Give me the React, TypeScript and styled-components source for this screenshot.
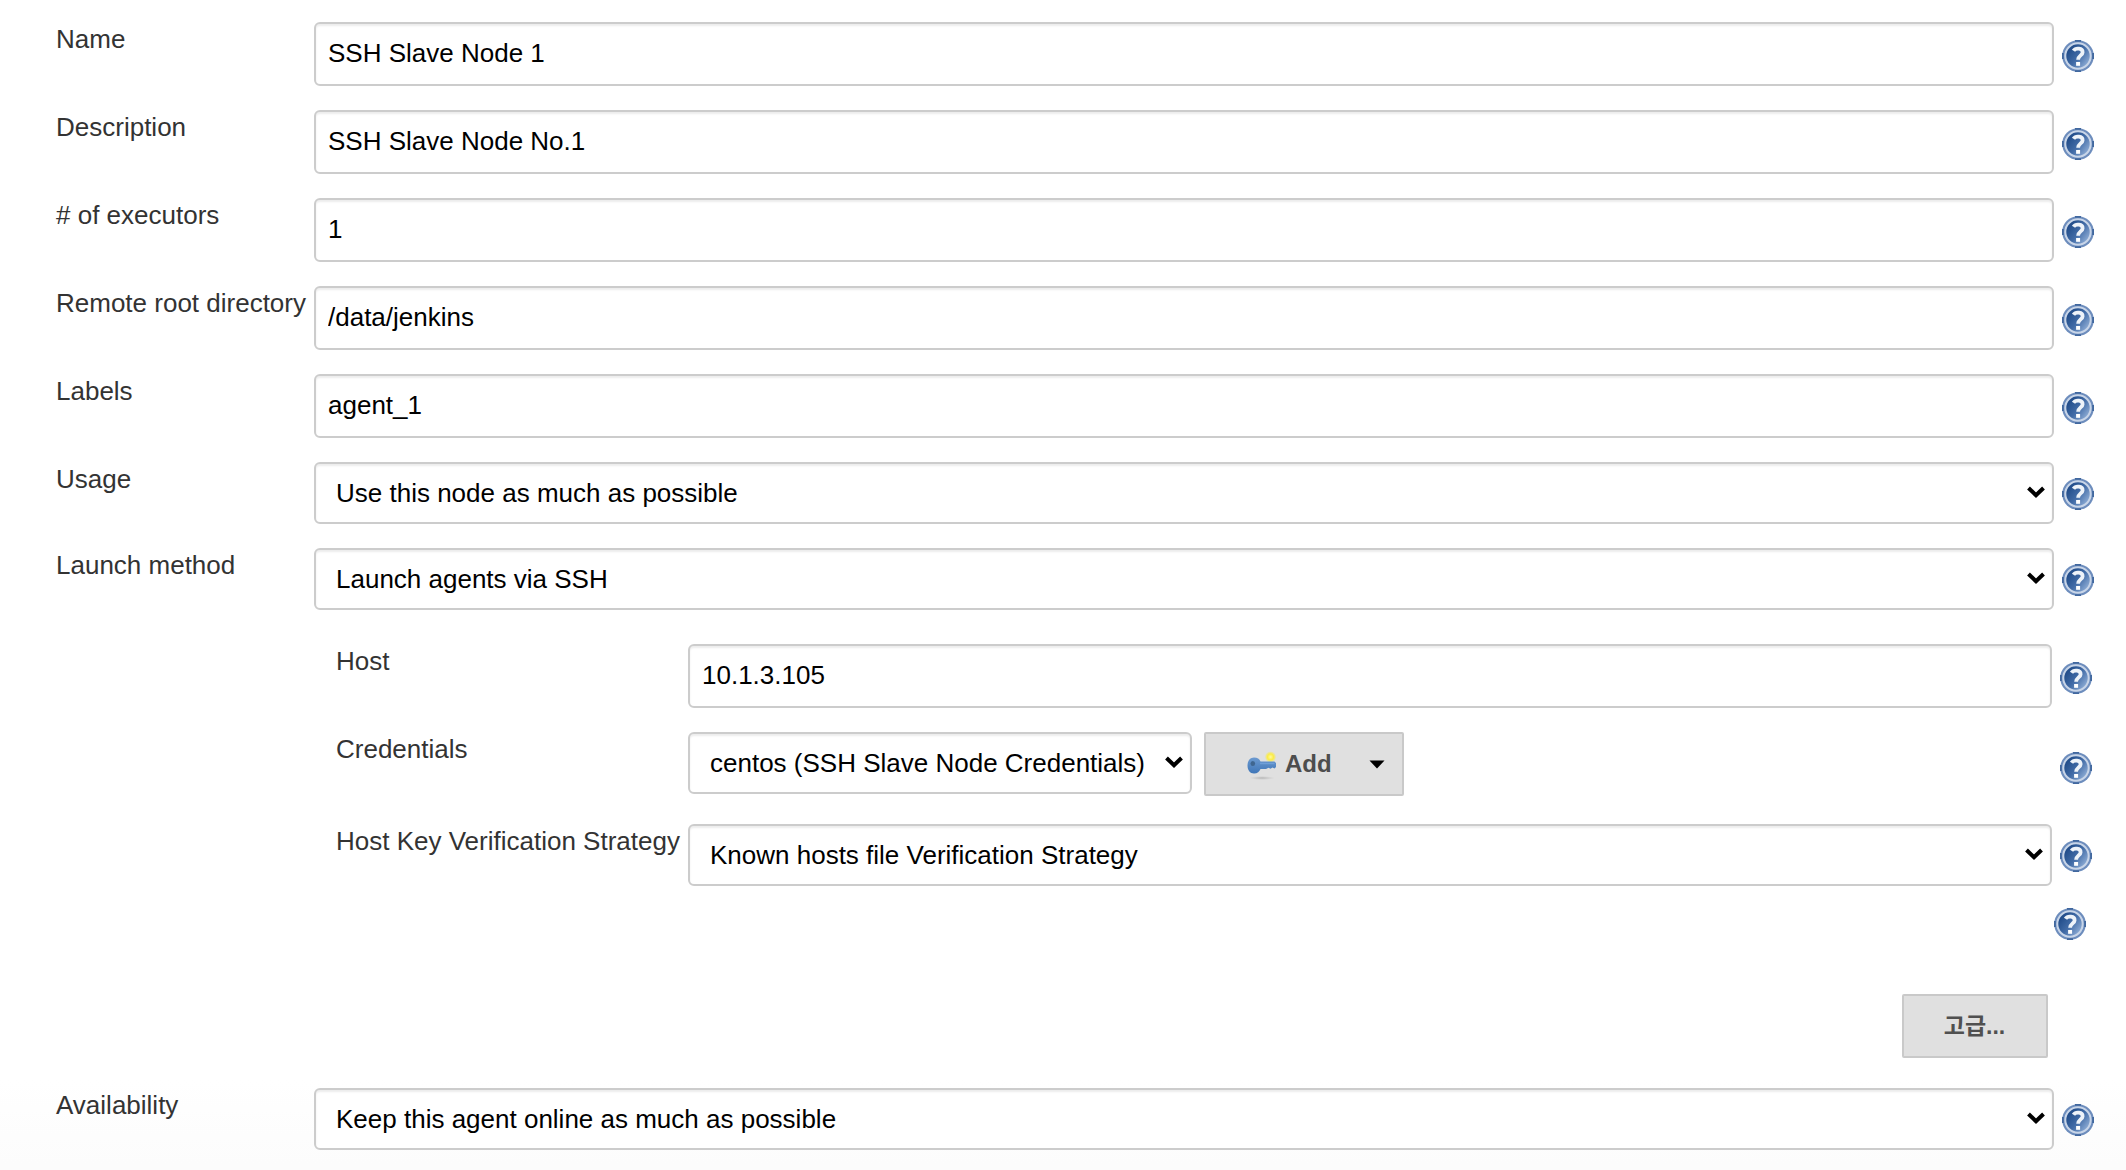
import React from "react";
import styled, { createGlobalStyle } from "styled-components";

const GlobalStyle = createGlobalStyle`
  html, body { margin: 0; padding: 0; background: #fff; }
  *, *::before, *::after { box-sizing: border-box; }
`;

const Page = styled.main`
  width: 2126px;
  height: 1170px;
  overflow: hidden;
  padding: 22px 0 0 56px;
  background: linear-gradient(to bottom, #ffffff 1080px, #fcfcfc 1165px);
  font-family: "Liberation Sans", Arial, "Noto Sans CJK KR", sans-serif;
  font-size: 26px;
  color: #333;
`;

const Row = styled.div<{ $label: number; $field: number; $height: number }>`
  display: grid;
  grid-template-columns: ${(p) => p.$label}px ${(p) => p.$field}px 40px;
  align-items: start;
  height: ${(p) => p.$height}px;
`;

const Label = styled.label`
  padding-top: 2px;
  line-height: 30px;
  white-space: nowrap;
`;

const Nested = styled.section`
  padding: 10px 0 0 280px;
`;

const Controls = styled.div`
  display: flex;
  gap: 12px;
`;

const Input = styled.input`
  width: 100%;
  height: 64px;
  padding: 0 12px 1px;
  border: 2px solid #ccc;
  border-radius: 6px;
  box-shadow: inset 0 2px 2px rgba(0, 0, 0, 0.075);
  background: #fff;
  color: #000;
  font: inherit;
  outline: none;
`;

const SelectBox = styled.div<{ $width?: number }>`
  display: flex;
  align-items: center;
  justify-content: space-between;
  width: ${(p) => (p.$width ? `${p.$width}px` : "100%")};
  height: 62px;
  padding: 0 7px 0 20px;
  border: 2px solid #ccc;
  border-radius: 6px;
  box-shadow: inset 0 2px 2px rgba(0, 0, 0, 0.075);
  background: #fff;
  color: #000;
  line-height: 30px;
  white-space: nowrap;
`;

const Chevron = styled.svg`
  display: block;
  width: 18px;
  height: 12px;
  margin-bottom: 2px;
  flex: none;
`;

const HelpButton = styled.a<{ $top: number }>`
  display: block;
  width: 32px;
  height: 32px;
  margin: ${(p) => p.$top}px 0 0 8px;
`;

const Button = styled.button<{ $width: number }>`
  display: flex;
  align-items: center;
  width: ${(p) => p.$width}px;
  height: 64px;
  padding: 0;
  border: 2px solid #c9c9c9;
  border-radius: 2px;
  background: #e0e0e0;
  color: #4d4d4d;
  font: bold 24px "Liberation Sans", Arial, "Noto Sans CJK KR", sans-serif;
`;

const AddButton = styled(Button)`
  padding: 0 17px 0 40px;
`;

const AddText = styled.span`
  margin-left: 7px;
  flex: 1;
  text-align: left;
`;

const AdvancedButton = styled(Button)`
  justify-content: center;
  padding: 0 1px 4px 0;
  font-size: 23px;
  color: #505050;
`;

const HelpOnly = styled.div`
  display: flex;
  justify-content: flex-end;
  height: 86px;
  padding-right: 40px;
`;

const Actions = styled.div`
  display: flex;
  justify-content: flex-end;
  height: 94px;
  padding-right: 78px;
`;

function HelpIcon() {
  return (
    <svg width="32" height="32" viewBox="0 0 32 32" aria-hidden="true">
      <defs>
        <linearGradient id="helpFill" x1="0.1" y1="0.25" x2="0.9" y2="0.85">
          <stop offset="0" stopColor="#204b88" />
          <stop offset="0.5" stopColor="#426ca7" />
          <stop offset="1" stopColor="#91afd7" />
        </linearGradient>
      </defs>
      <circle cx="16" cy="16" r="15.8" fill="#6d8dbd" />
      <path d="M13 0.900H19M13 31.100H19M0.900 13V19M31.100 13V19" stroke="#41689f" strokeWidth="1.800" />
      <circle cx="16" cy="16" r="12.700" fill="url(#helpFill)" stroke="#c8d5e8" strokeWidth="2" />
      <path
        d="M11.500 10.700C13.500 7.700 20.800 7.800 20.600 12.300C20.500 15.500 16.200 15.400 16.100 19.800"
        fill="none"
        stroke="#eef3f9"
        strokeWidth="3.800"
      />
      <rect x="14.100" y="22" width="4" height="3.800" fill="#fff" />
    </svg>
  );
}

function KeyIcon() {
  return (
    <svg width="32" height="32" viewBox="0 0 32 32" aria-hidden="true">
      <defs>
        <radialGradient id="keySpark">
          <stop offset="0" stopColor="#fff9a0" />
          <stop offset="0.550" stopColor="#fbec45" />
          <stop offset="1" stopColor="#f5e95a" stopOpacity="0.200" />
        </radialGradient>
        <radialGradient id="keyShade">
          <stop offset="0" stopColor="#888" stopOpacity="0.500" />
          <stop offset="1" stopColor="#aaa" stopOpacity="0" />
        </radialGradient>
        <linearGradient id="keyBody" x1="0" y1="0" x2="0" y2="1">
          <stop offset="0" stopColor="#6c9ad0" />
          <stop offset="1" stopColor="#3f76b8" />
        </linearGradient>
      </defs>
      <ellipse cx="16" cy="30" rx="13" ry="2" fill="url(#keyShade)" />
      <circle cx="24.500" cy="9" r="5.500" fill="url(#keySpark)" />
      <path
        d="M8 9.500C11.500 9.500 13.500 11 14.500 13.500H28.500L30 15V19L28.500 20.500L26.500 19.500L24.500 20.800L22.500 19.800L20 21H14.500C13.500 23.500 11.500 25.500 8 25.500C4 25.500 1.500 22 1.500 17.500C1.500 13 4 9.500 8 9.500Z"
        fill="url(#keyBody)"
      />
      <path d="M14 15.500H28.500" stroke="#6f9fd8" strokeWidth="1.400" />
      <ellipse cx="6.800" cy="15.500" rx="2.300" ry="2.500" fill="#3f6690" />
    </svg>
  );
}

function Arrow() {
  return (
    <Chevron viewBox="0 0 18 12" aria-hidden="true">
      <path d="M1.500 2L9 9.200L16.500 2" fill="none" stroke="#000" strokeWidth="4" />
    </Chevron>
  );
}

function Help({ top }: { top: number }) {
  return (
    <HelpButton $top={top}>
      <HelpIcon />
    </HelpButton>
  );
}

function Select({ children, width }: { children: string; width?: number }) {
  return (
    <SelectBox $width={width}>
      <span>{children}</span>
      <Arrow />
    </SelectBox>
  );
}

type RowProps = {
  label: string;
  height: number;
  help: number;
  nested?: boolean;
  children: React.ReactNode;
};

function FormRow({ label, height, help, nested, children }: RowProps) {
  return (
    <Row $label={nested ? 352 : 258} $field={nested ? 1364 : 1740} $height={height}>
      <Label>{label}</Label>
      {children}
      <Help top={help} />
    </Row>
  );
}

const textFields = [
  { label: "Name", value: "SSH Slave Node 1" },
  { label: "Description", value: "SSH Slave Node No.1" },
  { label: "# of executors", value: "1" },
  { label: "Remote root directory", value: "/data/jenkins" },
  { label: "Labels", value: "agent_1" },
];

export default function App() {
  return (
    <>
      <GlobalStyle />
      <Page>
        {textFields.map((f) => (
          <FormRow key={f.label} label={f.label} height={88} help={18}>
            <Input defaultValue={f.value} />
          </FormRow>
        ))}
        <FormRow label="Usage" height={86} help={16}>
          <Select>Use this node as much as possible</Select>
        </FormRow>
        <FormRow label="Launch method" height={86} help={16}>
          <Select>Launch agents via SSH</Select>
        </FormRow>
        <Nested>
          <FormRow nested label="Host" height={88} help={18}>
            <Input defaultValue="10.1.3.105" />
          </FormRow>
          <FormRow nested label="Credentials" height={92} help={20}>
            <Controls>
              <Select width={504}>centos (SSH Slave Node Credentials)</Select>
              <AddButton $width={200}>
                <KeyIcon />
                <AddText>Add</AddText>
                <svg width="16" height="9" viewBox="0 0 16 9" aria-hidden="true">
                  <path d="M0.500 0.500H15.500L8 8.500Z" fill="#000" />
                </svg>
              </AddButton>
            </Controls>
          </FormRow>
          <FormRow nested label="Host Key Verification Strategy" height={84} help={16}>
            <Select>Known hosts file Verification Strategy</Select>
          </FormRow>
        </Nested>
        <HelpOnly>
          <Help top={0} />
        </HelpOnly>
        <Actions>
          <AdvancedButton $width={146}>고급...</AdvancedButton>
        </Actions>
        <FormRow label="Availability" height={62} help={16}>
          <Select>Keep this agent online as much as possible</Select>
        </FormRow>
      </Page>
    </>
  );
}
